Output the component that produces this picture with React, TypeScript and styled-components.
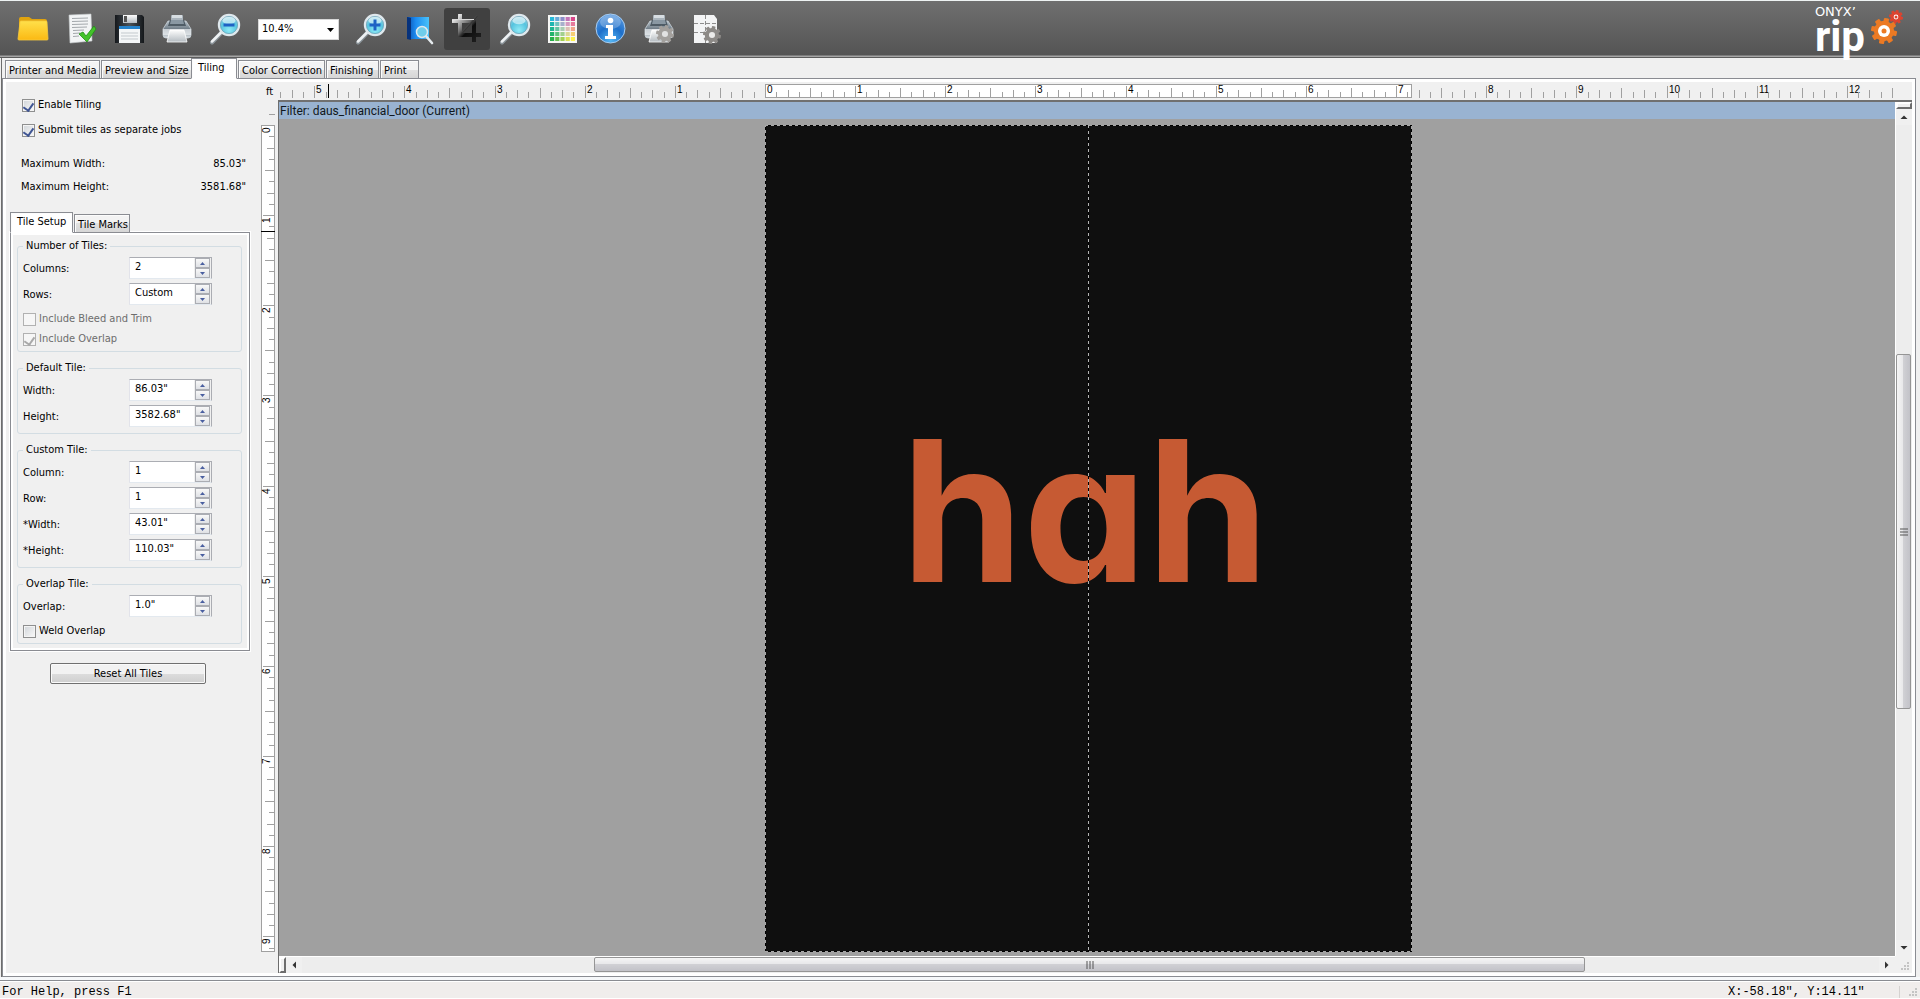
import React from "react";
import styled, { createGlobalStyle, css } from "styled-components";

const UI_FONT = '"DejaVu Sans Condensed", "DejaVu Sans", sans-serif';
const FOOT = 90.15;
const ART_WIDTH = 647;
const ART_HEIGHT = 827;

const GlobalStyle = createGlobalStyle`
  * { box-sizing: border-box; }
  body {
    margin: 0;
    background: #f0f0f0;
    color: #000;
    font-family: ${UI_FONT};
    font-size: 11px;
    line-height: 14px;
  }
  button, input, select { font: inherit; color: inherit; margin: 0; }
`;

/* ---------- frame ---------- */

const Page = styled.div`
  display: flex;
  flex-direction: column;
  min-height: 100vh;
`;

const Toolbar = styled.header`
  display: flex;
  align-items: center;
  height: 58px;
  padding-left: 9px;
  border-top: 1px solid #eef3f3;
  border-bottom: 1px solid #5c5c5c;
  background: linear-gradient(#6f6f6f, #545454 54px, #a5a5a5 55px);
`;

const ToolButton = styled.button<{ $active?: boolean }>`
  display: flex;
  align-items: center;
  justify-content: center;
  width: 46px;
  height: 42px;
  margin: 0 1px;
  padding: 0;
  border: 0;
  border-radius: 3px;
  background: ${(p) => (p.$active ? "#404040" : "transparent")};
`;

const ZoomBox = styled.div`
  position: relative;
  display: flex;
  width: 81px;
  height: 21px;
  margin: 0 8px 0 9px;
`;

const ZoomSelect = styled.select`
  appearance: none;
  width: 100%;
  padding: 0 3px;
  border: 1px solid #d8d8d8;
  border-radius: 0;
  background: #fff;
`;

const ZoomArrow = styled.svg`
  position: absolute;
  right: 5px;
  top: 9px;
  pointer-events: none;
`;

const Brand = styled.div`
  display: flex;
  align-items: flex-start;
  gap: 6px;
  height: 54px;
  margin-left: auto;
  padding-right: 15px;
  color: #fff;
`;

const BrandWords = styled.div`
  display: flex;
  flex-direction: column;
`;

const BrandTop = styled.span`
  padding-top: 3px;
  font: 13px/14px "DejaVu Sans", sans-serif;
`;

const BrandMain = styled.span`
  height: 36px;
  font: bold 42px/35px Roboto, sans-serif;
`;

const Workspace = styled.main`
  display: flex;
  flex: 1;
  flex-direction: column;
  margin: 0 4px 0 1px;
  border-left: 1px solid #6d6d6d;
`;

const TabBar = styled.nav`
  display: flex;
  align-items: flex-end;
  height: 21px;
  padding-left: 2px;
  position: relative;
  z-index: 1;
  margin-bottom: -1px;
`;

const Tab = styled.button<{ $width: number; $active?: boolean }>`
  width: ${(p) => p.$width}px;
  height: 19px;
  margin: 0 0 0 1px;
  padding: 2px 0 0 3px;
  border: 1px solid #8a8c92;
  background: linear-gradient(#f3f3f3 50%, #e2e2e2 50%, #d6d6d6);
  box-shadow: inset 1px 1px 0 #fcfcfc;
  text-align: left;
  white-space: nowrap;
  ${(p) =>
    p.$active &&
    css`
      height: 21px;
      margin-left: -1px;
      padding: 0 0 1px 6px;
      border-bottom-color: #fff;
      background: #fff;
    `}
`;

const TabPage = styled.section`
  display: flex;
  flex: 1;
  padding: 3px;
  border: 1px solid #8a8c92;
  background: #fff;
`;

const PageBody = styled.div`
  display: flex;
  flex: 1;
  min-width: 0;
  background: #f0f0f0;
`;

/* ---------- settings panel ---------- */

const Panel = styled.aside`
  flex: none;
  width: 255px;
  padding: 13px 11px 0 4px;
`;

const Options = styled.div`
  display: flex;
  flex-direction: column;
  gap: 5px;
  padding-left: 12px;
`;

const CheckLabel = styled.label<{ $disabled?: boolean }>`
  display: flex;
  align-items: center;
  gap: 3px;
  height: 20px;
  color: ${(p) => (p.$disabled ? "#6d6d6d" : "#000")};
  white-space: nowrap;
`;

const Tick = styled.input`
  appearance: none;
  flex: none;
  width: 13px;
  height: 13px;
  border: 1px solid #8e8f8f;
  background: linear-gradient(135deg, #d4d8dc, #f6f6f6) content-box, #f4f4f4;
  padding: 1px;
  display: grid;
  place-items: center;
  &:checked::after {
    content: "";
    width: 5px;
    height: 8px;
    margin-bottom: 3px;
    border: solid #3f5593;
    border-width: 0 2px 2px 0;
    transform: rotate(35deg);
  }
  &:disabled {
    border-color: #b1b1b1;
    background: #f6f6f6;
  }
  &:disabled::after {
    border-color: #a9a9a9;
  }
`;

const Limits = styled.dl`
  display: grid;
  grid-template-columns: 1fr auto;
  row-gap: 9px;
  margin: 17px 0 18px;
  padding: 0 4px 0 11px;
  dd { margin: 0; text-align: right; }
`;

const TileTabs = styled.div`
  display: flex;
  align-items: flex-end;
  height: 21px;
  margin-bottom: -1px;
  padding-left: 1px;
  position: relative;
`;

const TilePage = styled.div`
  display: flex;
  flex-direction: column;
  gap: 9px;
  padding: 6px 7px 6px 6px;
  border: 1px solid #8a8c92;
  outline: 1px solid #fff;
  box-shadow: inset 0 0 0 2px #fff;
`;

const Group = styled.fieldset`
  margin: 0;
  padding: 4px 29px 2px 5px;
  border: 1px solid #d3dde3;
  border-radius: 3px;
  legend {
    padding: 0 3px;
    line-height: 14px;
  }
`;

const Field = styled.div`
  display: flex;
  justify-content: space-between;
  height: 26px;
  label { line-height: 23px; }
`;

const SpinBox = styled.div`
  display: flex;
  width: 83px;
  height: 22px;
  border: 1px solid #abadb3;
  border-left-color: #e2e3ea;
  border-bottom-color: #e3e9ef;
  background: #fff;
`;

const SpinInput = styled.input`
  flex: 1;
  min-width: 0;
  padding: 0 0 3px 5px;
  border: 0;
  background: transparent;
`;

const SpinButtons = styled.div`
  display: flex;
  flex-direction: column;
  padding: 0 1px;
  background: #f0f0f0;
`;

const SpinButton = styled.button`
  display: grid;
  place-items: center;
  width: 15px;
  height: 10px;
  padding: 0;
  border: 1px solid #abadb3;
  background: linear-gradient(#f8f8f8, #dfe1e5);
`;

const ResetRow = styled.div`
  display: flex;
  justify-content: center;
  padding: 12px 0 0 0;
`;

const ResetButton = styled.button`
  width: 156px;
  height: 21px;
  margin-right: 4px;
  padding: 0;
  border: 1px solid #707070;
  border-radius: 2px;
  background: linear-gradient(#f2f2f2 50%, #dddddd 50%, #cfcfcf);
  box-shadow: inset 0 0 0 1px #fafafa;
`;

/* ---------- preview ---------- */

const Preview = styled.section`
  display: grid;
  flex: 1;
  min-width: 0;
  grid-template-columns: 17px minmax(0, 1fr) 18px;
  grid-template-rows: 18px minmax(0, 1fr);
`;

const Unit = styled.span`
  padding: 3px 0 0 5px;
`;

const RulerX = styled.svg`
  width: 100%;
  height: 18px;
  padding-left: 2px;
`;

const RulerY = styled.svg`
  width: 17px;
  height: 100%;
`;

const Viewport = styled.div`
  display: grid;
  grid-column: 2 / 4;
  grid-template-columns: minmax(0, 1fr) 17px;
  grid-template-rows: minmax(0, 1fr) 17px;
  border: solid #6d6d6d;
  border-width: 2px 0 0 1px;
  border-top-color: #707070;
`;

const Canvas = styled.div`
  display: flex;
  flex-direction: column;
  background: #a0a0a0;
`;

const FilterBar = styled.div`
  height: 17px;
  padding-left: 1px;
  background: #99b3d1;
  font: 12px/19px Roboto, sans-serif;
  color: #101820;
`;

const Stage = styled.div`
  display: flex;
  flex: 1;
  justify-content: center;
  padding: 6px 0 3px 2px;
`;

const Artwork = styled.div`
  position: relative;
  display: flex;
  align-items: center;
  justify-content: center;
  width: ${ART_WIDTH}px;
  height: ${ART_HEIGHT}px;
  padding: 0 6px 56px 0;
  background: #0f0f0f;
  color: #c65a33;
  font: 700 196px/1 Inter, sans-serif;
  font-feature-settings: "cv11" 1;
`;

const Marquee = styled.svg`
  position: absolute;
  inset: 0;
  width: 100%;
  height: 100%;
`;

const ScrollX = styled.div`
  display: flex;
  border-top: 1px solid #fff;
  background: #ededed;
`;

const ScrollY = styled.div`
  display: flex;
  flex-direction: column;
  border-left: 1px solid #fff;
  background: #ededed;
`;

const SplitGrip = styled.div<{ $vertical?: boolean }>`
  flex: none;
  width: ${(p) => (p.$vertical ? "16px" : "7px")};
  height: ${(p) => (p.$vertical ? "7px" : "16px")};
  border: 2px solid #6d6d6d;
  border-top-color: #fff;
  border-left-color: #fff;
  background: #f0f0f0;
`;

const ScrollButton = styled.button`
  display: grid;
  place-items: center;
  flex: none;
  width: 16px;
  height: 16px;
  padding: 0;
  border: 0;
  background: #f0f0f0;
`;

const Track = styled.div<{ $grow: number }>`
  flex: ${(p) => p.$grow} 1 0;
`;

const Thumb = styled.div<{ $grow: number; $vertical?: boolean }>`
  display: flex;
  align-items: center;
  justify-content: center;
  flex: ${(p) => p.$grow} 1 0;
  ${(p) => (p.$vertical ? "width: 15px;" : "height: 15px;")}
  border: 1px solid #959595;
  border-radius: 2px;
  background: linear-gradient(
    ${(p) => (p.$vertical ? "to right" : "to bottom")},
    #f5f5f5,
    #e8e8ea 45%,
    #d0d0d4 50%,
    #c2c2c8
  );
`;

const SizeCorner = styled.div`
  display: flex;
  align-items: flex-end;
  justify-content: flex-end;
  padding: 2px;
  background: #f0f0f0;
`;

/* ---------- status bar ---------- */

const StatusBar = styled.footer`
  display: flex;
  align-items: center;
  height: 22px;
  border-top: 3px solid #f6f8fa;
  border-bottom: 1px solid #fff;
  background: linear-gradient(#8a8c92 1px, #fff 1px, #fff 2px, #f0edec 2px);
  font: 12px/12px "Liberation Mono", monospace;
  padding: 6px 2px 0;
`;

const Position = styled.span`
  width: 172px;
  margin-left: auto;
  border-right: 1px solid #d5d2d0;
`;

const StatusGrip = styled.div`
  display: flex;
  justify-content: flex-end;
  width: 18px;
`;

/* ---------- drawings ---------- */

const Icon = ({ children }: { children: React.ReactNode }) => (
  <svg width="32" height="32" viewBox="0 0 32 32" aria-hidden="true">
    {children}
  </svg>
);

const GradientDefs = styled.svg`
  position: absolute;
`;

const Gradients = () => (
  <GradientDefs width="0" height="0" aria-hidden="true">
    <defs>
      <linearGradient id="gold" x1="0" y1="0" x2="0" y2="1">
        <stop offset="0" stopColor="#ffe04a" />
        <stop offset="1" stopColor="#fbb913" />
      </linearGradient>
      <linearGradient id="silver" x1="0" y1="0" x2="0" y2="1">
        <stop offset="0" stopColor="#fdfdfd" />
        <stop offset="1" stopColor="#b4bbc1" />
      </linearGradient>
      <linearGradient id="steel" x1="0" y1="0" x2="0" y2="1">
        <stop offset="0" stopColor="#b9c4cc" />
        <stop offset="0.5" stopColor="#6b7883" />
        <stop offset="1" stopColor="#dde3e7" />
      </linearGradient>
      <radialGradient id="lens" cx="0.5" cy="0.75" r="0.7">
        <stop offset="0" stopColor="#8eeaf6" />
        <stop offset="0.6" stopColor="#55c3de" />
        <stop offset="1" stopColor="#a6dcea" />
      </radialGradient>
      <linearGradient id="blue" x1="0" y1="0" x2="1" y2="0">
        <stop offset="0" stopColor="#0a4fb0" />
        <stop offset="0.4" stopColor="#1c8cf0" />
        <stop offset="1" stopColor="#49c2fa" />
      </linearGradient>
      <radialGradient id="info" cx="0.5" cy="0.9" r="0.9">
        <stop offset="0" stopColor="#56b8f4" />
        <stop offset="0.5" stopColor="#1d6fca" />
        <stop offset="1" stopColor="#5d9be0" />
      </radialGradient>
      <linearGradient id="dark" x1="0" y1="0" x2="1" y2="0">
        <stop offset="0" stopColor="#15181c" />
        <stop offset="0.5" stopColor="#4b5258" />
        <stop offset="1" stopColor="#14171a" />
      </linearGradient>
      <linearGradient id="cropMetal" x1="0" y1="0" x2="1" y2="1">
        <stop offset="0" stopColor="#e6e6e6" />
        <stop offset="0.4" stopColor="#6d6d6d" />
        <stop offset="0.6" stopColor="#0d0d0d" />
        <stop offset="1" stopColor="#1c1c1c" />
      </linearGradient>
    </defs>
  </GradientDefs>
);

const Lens = ({ sign }: { sign?: "+" | "-" }) => (
  <Icon>
    <path d="M12.500 19.500 3 29.500" stroke="#8b949a" strokeWidth="4" strokeLinecap="round" />
    <path d="M12.500 19 3 28.500" stroke="#eef1f3" strokeWidth="2.500" strokeLinecap="round" />
    <circle cx="20" cy="12" r="10" fill="url(#lens)" stroke="#dfe8ed" strokeWidth="2.400" />
    <circle cx="20" cy="12" r="8.600" fill="none" stroke="#6fa3b8" strokeWidth="0.800" />
    <ellipse cx="20" cy="7.500" rx="6.500" ry="3.800" fill="#fff" opacity="0.550" />
    {sign && <path d="M14.500 12h11" stroke="#1e62c4" strokeWidth="3" />}
    {sign === "+" && <path d="M20 6.500v11" stroke="#1e62c4" strokeWidth="3" />}
  </Icon>
);

const PrinterShape = () => (
  <>
    <rect x="10" y="2" width="12" height="8" rx="1" fill="#aab4bc" />
    <rect x="11" y="2" width="10" height="3" fill="#d7dde1" />
    <path d="M7 8h18l5 8v6q0 3-3 3H5q-3 0-3-3v-6z" fill="url(#steel)" stroke="#c9d2d8" strokeWidth="0.800" />
    <path d="M9 7h14l2 6H7z" fill="#4f5c66" />
    <path d="M10 7h12l1 4H9z" fill="#8a98a3" />
    <path d="M2 16h28v6H2z" fill="#e9edf0" opacity="0.750" />
    <path d="M9 17h14l3 12H6z" fill="url(#silver)" stroke="#fff" strokeWidth="0.800" />
  </>
);

const TEETH = [0, 45, 90, 135, 180, 225, 270, 315];

const Gear = ({ x, y, r, fill, hole }: { x: number; y: number; r: number; fill: string; hole: string }) => (
  <g transform={`translate(${x} ${y})`}>
    {TEETH.map((a) => (
      <rect key={a} x={-r * 0.2} y={-r} width={r * 0.4} height={r * 0.5} rx={r * 0.08} fill={fill} transform={`rotate(${a + 12})`} />
    ))}
    <circle r={r * 0.78} fill={fill} />
    <circle r={r * 0.34} fill={hole} />
  </g>
);

const FolderIcon = () => (
  <Icon>
    <path d="M2 6q0-2 2-2h8l3 2h13q2 0 2 2v18H2z" fill="#e0a30e" />
    <path d="M3 9q0-1 1-1h25q1 0 1 1l1 17q0 1-1 1H2q-1 0-1-1z" fill="url(#gold)" stroke="#f6c93c" strokeWidth="0.800" />
  </Icon>
);

const ApproveIcon = () => (
  <Icon>
    <path d="M4 2 26 1l1 27-22 2z" fill="#f2f4f5" stroke="#c2c7ca" strokeWidth="0.600" />
    <path d="M7 5.500 23 5M7 8.500 23 8M7 11.500 23 11M7 14.500 22 14M8 17.500 19 17M8 20.500 15 20M8 23.500 14 23" stroke="#a3a8ac" strokeWidth="1" />
    <path d="m14 21 4-2 3 4 8-10 2 3-9 13z" fill="#43c22a" stroke="#1f8f14" strokeWidth="0.800" />
  </Icon>
);

const SaveIcon = () => (
  <Icon>
    <path d="M2 2h27l2 2v26H2z" fill="url(#dark)" />
    <path d="M10 2h14v8H10z" fill="url(#silver)" />
    <path d="M11 3h3v6h-3z" fill="#555" />
    <path d="M6 13h21v17H6z" fill="#f4f6f7" />
    <path d="M6 13h21v3H6z" fill="#2583cc" />
    <path d="M8 20h17M8 23h17M8 26h17" stroke="#c3c9cd" />
  </Icon>
);

const PreviewIcon = () => (
  <Icon>
    <path d="M4 4 26 4v22L4 26z" fill="url(#blue)" />
    <path d="m4 4 4 1v22l-4-1z" fill="#06327c" />
    <path d="m22 22 7 8" stroke="#e6ebee" strokeWidth="2.600" strokeLinecap="round" />
    <circle cx="19" cy="19" r="5.500" fill="#6fcdea" stroke="#dfe9ee" strokeWidth="1.500" />
  </Icon>
);

const CropIcon = () => (
  <Icon>
    <g fill="none" stroke="url(#cropMetal)">
      <path d="M9 1v21h21" strokeWidth="4" strokeLinejoin="miter" />
      <path d="M1 8h22v21" strokeWidth="4" />
      <path d="M9 22 26 3" strokeWidth="1.500" />
    </g>
    <path d="M1 6.500h22M7.500 1v6" stroke="#d9d9d9" strokeWidth="1" />
  </Icon>
);

const GRID_COLORS = [
  "#27b9d8", "#67a8d8", "#8d8fca", "#c274b8", "#d9488c",
  "#1fb6b0", "#6fc3c0", "#a8b0cc", "#d49ac0", "#e77b9c",
  "#1fb592", "#62c4a2", "#a9cdb4", "#dcc0b4", "#f2a58c",
  "#22b36c", "#5cc27e", "#a2d08c", "#dcd894", "#f6cf74",
  "#26b04c", "#62c04e", "#a4d152", "#dbe254", "#fdf24e",
];

const SwatchIcon = () => (
  <Icon>
    <rect x="1" y="2" width="29" height="28" fill="#f7f7f5" />
    {GRID_COLORS.map((c, i) => (
      <rect key={c + i} x={3 + (i % 5) * 5.2} y={4 + Math.floor(i / 5) * 5} width="4.200" height="4" fill={c} />
    ))}
  </Icon>
);

const InfoIcon = () => (
  <Icon>
    <circle cx="15.500" cy="15.500" r="14.500" fill="url(#info)" stroke="#a9cdf0" strokeWidth="1" />
    <ellipse cx="15.500" cy="9" rx="10.500" ry="7" fill="#fff" opacity="0.250" />
    <circle cx="15.500" cy="7.500" r="2.800" fill="#fff" />
    <path d="M11 12h7v11h3v3H10v-3h3v-8h-2z" fill="#fff" />
  </Icon>
);

const PrinterIcon = () => (
  <Icon>
    <PrinterShape />
  </Icon>
);

const PrinterSetupIcon = () => (
  <Icon>
    <PrinterShape />
    <Gear x={22} y={21} r={9} fill="#a3a09d" hole="#e2e2e2" />
  </Icon>
);

const PageSetupIcon = () => (
  <Icon>
    <path d="M3 2h20l3 4v24H3z" fill="#f3f4f5" />
    <path d="M14.500 2v28M3 10.500h23M3 19.500h23" stroke="#8d8d8d" strokeDasharray="4 2" />
    <Gear x={21} y={22} r={9} fill="#8d8a87" hole="#ecebea" />
  </Icon>
);

const BrandGears = () => (
  <svg width="34" height="44" viewBox="0 0 34 44" aria-hidden="true">
    <Gear x={25} y={15} r={7} fill="#dc4430" hole="#fff" />
    <circle cx="25" cy="15" r="1.500" fill="#dc4430" />
    <Gear x={13} y={29} r={13} fill="#ec7a24" hole="#fff" />
    <circle cx="13" cy="29" r="6" fill="#fff" />
    <circle cx="13" cy="29" r="2.500" fill="#ec7a24" />
  </svg>
);

const Arrow = ({ dir, color = "#333", small }: { dir: "up" | "down" | "left" | "right"; color?: string; small?: boolean }) => {
  const turn = { up: 0, right: 90, down: 180, left: 270 }[dir];
  return (
    <svg width={small ? 5 : 8} height={small ? 3 : 8} viewBox={small ? "0 0 5 3" : "0 0 8 8"} aria-hidden="true">
      {small ? (
        <path d={dir === "up" ? "M0 3 2.500 0 5 3z" : "M0 0h5L2.500 3z"} fill={color} />
      ) : (
        <path d="M.5 6 4 2.500 7.500 6z" fill={color} transform={`rotate(${turn} 4 4)`} />
      )}
    </svg>
  );
};

const ThumbGrip = ({ vertical }: { vertical?: boolean }) => (
  <svg width="8" height="8" aria-hidden="true">
    <path
      d={vertical ? "M0 1h8M0 4h8M0 7h8" : "M1 0v8M4 0v8M7 0v8"}
      stroke="#555"
      strokeWidth="1"
    />
  </svg>
);

const DotCorner = () => (
  <svg width="10" height="10" aria-hidden="true">
    <path d="M7 1h2v2H7zM4 4h2v2H4zM7 4h2v2H7zM1 7h2v2H1zM4 7h2v2H4zM7 7h2v2H7z" fill="#c4c4c4" />
  </svg>
);

/* Tick marks every eighth of a foot: [position, tick length, foot number or null] */
const ticks = (from: number, to: number): [number, number, number | null][] => {
  const out: [number, number, number | null][] = [];
  for (let i = from; i <= to; i++) {
    const length = i % 8 === 0 ? 12 : i % 4 === 0 ? 10 : i % 2 === 0 ? 8 : 6;
    out.push([Math.round((i * FOOT) / 8), length, i % 8 === 0 ? Math.abs(i / 8) : null]);
  }
  return out;
};

const HorizontalRuler = () => (
  <RulerX aria-label="Horizontal ruler">
    <svg x="50%" overflow="visible">
      <g transform="translate(-322 0)" shapeRendering="crispEdges">
        <rect x="0.500" y="2.500" width={ART_WIDTH - 1} height="13" fill="#fff" stroke="#a0a0a0" />
        {ticks(-43, 100).map(([at, length, n]) => (
          <React.Fragment key={at}>
            <rect x={at} y={16 - length} width="1" height={length} fill="#a0a0a0" />
            {n !== null && (
              <text x={at + 2} y="11" fontFamily="Liberation Sans, sans-serif" fontSize="10">
                {n}
              </text>
            )}
          </React.Fragment>
        ))}
        <rect x="-437" y="2" width="1" height="14" />
      </g>
    </svg>
  </RulerX>
);

const VerticalRuler = () => (
  <RulerY aria-label="Vertical ruler">
    <g transform="translate(0 25)" shapeRendering="crispEdges">
      <rect x="0.500" y="0.500" width="13" height={ART_HEIGHT - 1} fill="#fff" stroke="#a0a0a0" />
      {ticks(-1, 73).map(([at, length, n]) => (
        <React.Fragment key={at}>
          <rect x={14 - length} y={at} width={length} height="1" fill="#a0a0a0" />
          {n !== null && (
            <text transform={`translate(9 ${at + 8}) rotate(-90)`} fontFamily="Liberation Sans, sans-serif" fontSize="10">
              {n}
            </text>
          )}
        </React.Fragment>
      ))}
      <rect x="0" y="106" width="14" height="1" />
    </g>
  </RulerY>
);

/* ---------- composed parts ---------- */

const Tool = ({ label, active, children }: { label: string; active?: boolean; children: React.ReactNode }) => (
  <ToolButton type="button" aria-label={label} $active={active}>
    {children}
  </ToolButton>
);

const Spin = ({ id, label, value }: { id: string; label: string; value: string }) => (
  <Field>
    <label htmlFor={id}>{label}</label>
    <SpinBox>
      <SpinInput id={id} type="text" defaultValue={value} />
      <SpinButtons>
        <SpinButton type="button" aria-label={`Increase ${label}`}>
          <Arrow dir="up" small color="#4a5fa0" />
        </SpinButton>
        <SpinButton type="button" aria-label={`Decrease ${label}`}>
          <Arrow dir="down" small color="#4a5fa0" />
        </SpinButton>
      </SpinButtons>
    </SpinBox>
  </Field>
);

const Check = ({ label, checked, disabled }: { label: string; checked?: boolean; disabled?: boolean }) => (
  <CheckLabel $disabled={disabled}>
    <Tick type="checkbox" defaultChecked={checked} disabled={disabled} />
    {label}
  </CheckLabel>
);

const MAIN_TABS: [string, number][] = [
  ["Printer and Media", 95],
  ["Preview and Size", 91],
  ["Tiling", 46],
  ["Color Correction", 87],
  ["Finishing", 53],
  ["Print", 39],
];

export default function App() {
  return (
    <Page>
      <GlobalStyle />
      <Gradients />
      <Toolbar>
        <Tool label="Open"><FolderIcon /></Tool>
        <Tool label="Submit job"><ApproveIcon /></Tool>
        <Tool label="Save"><SaveIcon /></Tool>
        <Tool label="Print"><PrinterIcon /></Tool>
        <Tool label="Zoom out"><Lens sign="-" /></Tool>
        <ZoomBox>
          <ZoomSelect aria-label="Zoom level" defaultValue="10.4%">
            <option>10.4%</option>
          </ZoomSelect>
          <ZoomArrow width="7" height="4" aria-hidden="true">
            <path d="M0 0h7L3.500 4z" />
          </ZoomArrow>
        </ZoomBox>
        <Tool label="Zoom in"><Lens sign="+" /></Tool>
        <Tool label="Preview"><PreviewIcon /></Tool>
        <Tool label="Crop" active><CropIcon /></Tool>
        <Tool label="Magnify"><Lens /></Tool>
        <Tool label="Swatches"><SwatchIcon /></Tool>
        <Tool label="Information"><InfoIcon /></Tool>
        <Tool label="Printer setup"><PrinterSetupIcon /></Tool>
        <Tool label="Page setup"><PageSetupIcon /></Tool>
        <Brand>
          <BrandWords>
            <BrandTop>ONYX’</BrandTop>
            <BrandMain>rip</BrandMain>
          </BrandWords>
          <BrandGears />
        </Brand>
      </Toolbar>

      <Workspace>
        <TabBar>
          {MAIN_TABS.map(([name, width]) => (
            <Tab key={name} type="button" $width={width} $active={name === "Tiling"}>
              {name}
            </Tab>
          ))}
        </TabBar>
        <TabPage>
          <PageBody>
            <Panel>
              <Options>
                <Check label="Enable Tiling" checked />
                <Check label="Submit tiles as separate jobs" checked />
              </Options>
              <Limits>
                <dt>Maximum Width:</dt>
                <dd>85.03"</dd>
                <dt>Maximum Height:</dt>
                <dd>3581.68"</dd>
              </Limits>
              <TileTabs>
                <Tab type="button" $width={63} $active>Tile Setup</Tab>
                <Tab type="button" $width={56}>Tile Marks</Tab>
              </TileTabs>
              <TilePage>
                <Group>
                  <legend>Number of Tiles:</legend>
                  <Spin id="columns" label="Columns:" value="2" />
                  <Spin id="rows" label="Rows:" value="Custom" />
                  <Check label="Include Bleed and Trim" disabled />
                  <Check label="Include Overlap" checked disabled />
                </Group>
                <Group>
                  <legend>Default Tile:</legend>
                  <Spin id="default-width" label="Width:" value={'86.03"'} />
                  <Spin id="default-height" label="Height:" value={'3582.68"'} />
                </Group>
                <Group>
                  <legend>Custom Tile:</legend>
                  <Spin id="custom-column" label="Column:" value="1" />
                  <Spin id="custom-row" label="Row:" value="1" />
                  <Spin id="custom-width" label="*Width:" value={'43.01"'} />
                  <Spin id="custom-height" label="*Height:" value={'110.03"'} />
                </Group>
                <Group>
                  <legend>Overlap Tile:</legend>
                  <Spin id="overlap" label="Overlap:" value={'1.0"'} />
                  <Check label="Weld Overlap" />
                </Group>
              </TilePage>
              <ResetRow>
                <ResetButton type="button">Reset All Tiles</ResetButton>
              </ResetRow>
            </Panel>

            <Preview>
              <Unit>ft</Unit>
              <HorizontalRuler />
              <span />
              <VerticalRuler />
              <Viewport>
                <Canvas>
                  <FilterBar>Filter: daus_financial_door (Current)</FilterBar>
                  <Stage>
                    <Artwork>
                      hah
                      <Marquee aria-hidden="true" shapeRendering="crispEdges">
                        <rect x="0" y="0" width="100%" height="100%" fill="none" stroke="#000" strokeWidth="2" />
                        <rect x="0" y="0" width="100%" height="100%" fill="none" stroke="#a8a8a8" strokeWidth="2" strokeDasharray="3 3" />
                        <line x1="50%" x2="50%" y1="0" y2="100%" stroke="#000" />
                        <line x1="50%" x2="50%" y1="0" y2="100%" stroke="#b4b4b4" strokeDasharray="3 3" />
                      </Marquee>
                    </Artwork>
                  </Stage>
                </Canvas>
                <ScrollY>
                  <SplitGrip $vertical />
                  <ScrollButton type="button" aria-label="Scroll up"><Arrow dir="up" /></ScrollButton>
                  <Track $grow={229} />
                  <Thumb $grow={354} $vertical><ThumbGrip vertical /></Thumb>
                  <Track $grow={231} />
                  <ScrollButton type="button" aria-label="Scroll down"><Arrow dir="down" /></ScrollButton>
                </ScrollY>
                <ScrollX>
                  <SplitGrip />
                  <ScrollButton type="button" aria-label="Scroll left"><Arrow dir="left" /></ScrollButton>
                  <Track $grow={292} />
                  <Thumb $grow={990}><ThumbGrip /></Thumb>
                  <Track $grow={294} />
                  <ScrollButton type="button" aria-label="Scroll right"><Arrow dir="right" /></ScrollButton>
                </ScrollX>
                <SizeCorner><DotCorner /></SizeCorner>
              </Viewport>
            </Preview>
          </PageBody>
        </TabPage>
      </Workspace>

      <StatusBar>
        <span>For Help, press F1</span>
        <Position>X:-58.18", Y:14.11"</Position>
        <StatusGrip><DotCorner /></StatusGrip>
      </StatusBar>
    </Page>
  );
}
